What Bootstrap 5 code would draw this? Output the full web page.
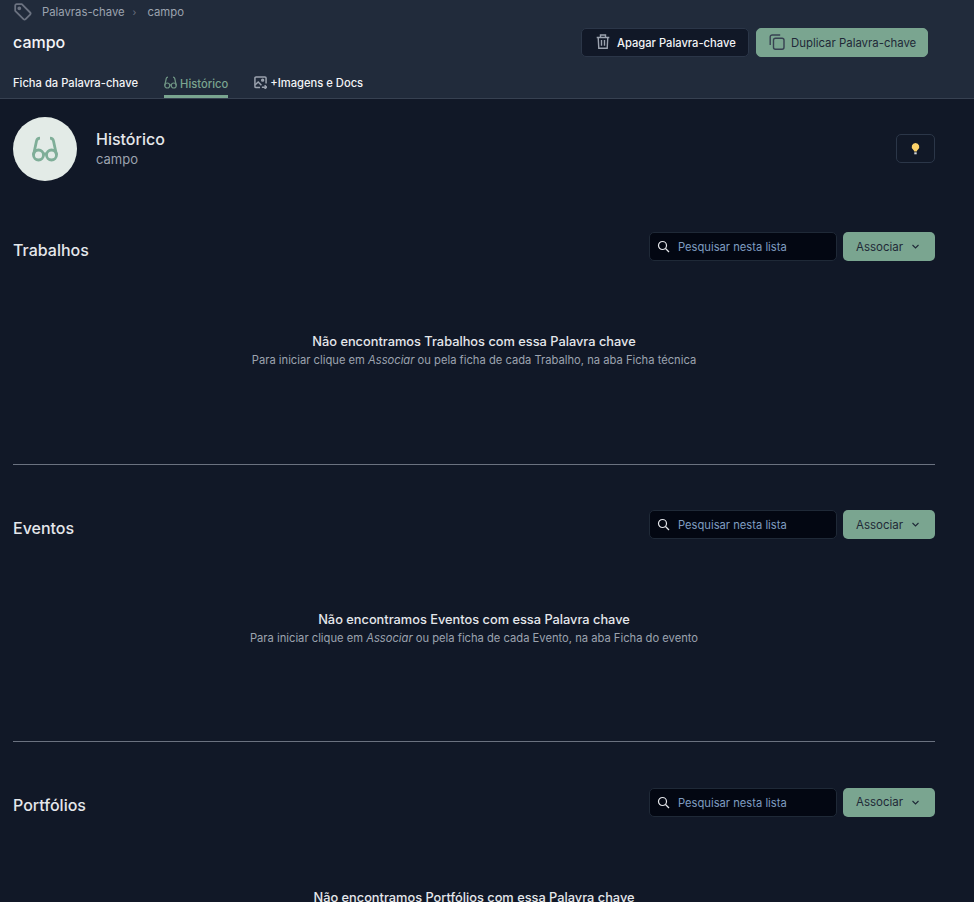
<!DOCTYPE html>
<html lang="pt">
<head>
<meta charset="utf-8">
<title>campo</title>
<link href="https://cdn.jsdelivr.net/npm/bootstrap@5.3.0/dist/css/bootstrap.min.css" rel="stylesheet">
<style>
html,body{height:902px;overflow:hidden}
body{background:#111827;font-family:Inter,"Liberation Sans",sans-serif;color:#e5e7eb;font-size:12px}
.topbar{height:99px;background:#212b3b;border-bottom:1px solid #374151;padding-left:13px;padding-right:46px;position:relative}
.crumbs{height:22px;color:#9ca3af;font-size:11.3px;padding-top:1px}
.crumbs svg.tag{margin-left:1px;margin-right:10px}
.crumbs span{padding-top:1px}
.crumb-sep{font-size:10px;color:#6b7280;margin:0 11px 0 8px}
.titlerow{height:32px;margin-top:5px}
.pagetitle{font-size:16px;font-weight:500;color:#f3f4f6;margin:0}
.actgroup{gap:7px;margin-bottom:2px}
.act{height:29px;border-radius:5px;font-size:11.2px;font-weight:500;display:inline-flex;align-items:center;white-space:nowrap;padding-top:4px}
.act svg{margin-top:-4px}
.act-dark{background:#111827;border:1px solid #2b3648;color:#f3f4f6;width:168px;padding-left:14px;padding-right:0;gap:7px}
.act-green{background:#7aa590;border:1px solid #7aa590;color:#1f2937;width:172px;font-weight:400;font-size:11.4px;padding-left:12px;padding-right:0;gap:6px}
.tabsrow{gap:26px;position:absolute;left:13px;top:71px;height:27px}
.tabitem{font-size:11.2px;font-weight:500;color:#f3f4f6;display:flex;align-items:flex-start;gap:3px;padding-top:4px;text-decoration:none;height:27px}
.tabitem svg{margin-top:1px}
.tabitem.on{color:#7aa590;border-bottom:3px solid #7aa590;padding-top:5px}
.tabitem.on svg{margin-top:0}
.pagewrap{padding:0 39px 0 13px}
.herorow{padding-top:18px;height:133.4px}
.heromain{height:64px}
.avatar{width:64px;height:64px;border-radius:50%;background:#e3ebe7}
.herotext{margin-left:19px;padding-bottom:2px}
.herotitle{font-size:16px;font-weight:500;color:#e5e7eb;line-height:20px;margin:0 0 1px}
.herosub{font-size:13px;color:#9ca3af;line-height:18px}
.tipbtn{width:39px;height:29px;border:1px solid #2b3648;border-radius:5px;background:#111827;margin-top:17px;padding:0}
.listhead{height:29px}
.listtitle{font-size:16px;font-weight:500;color:#e5e7eb;margin:8px 0 0}
.searchbox{width:188px;height:29px;background:#030712;border:1px solid #1f2937;border-radius:5px;padding-left:7px;gap:8px;color:#7f9cc0;font-size:11.2px}
.searchbox span{padding-top:2px}
.assoc{width:92px;height:29px;background:#7aa590;border:0;border-radius:5px;color:#1f2937;font-size:11.5px;padding:2px 0 0 13px;margin-left:6px;justify-content:flex-start}
.assoc svg{margin-left:8px;margin-top:-2px}
.emptyblock{text-align:center;height:202.4px;padding-top:72px}
.emptytitle{font-size:12.8px;font-weight:500;color:#e5e7eb;line-height:18px;margin:0}
.emptysub{font-size:11.2px;color:#9ca3af;line-height:18px;margin:0}
.rule{height:1px;background:#6b7280;margin:0 0 45.2px}
</style>
</head>
<body>
<header class="topbar">
  <div class="crumbs d-flex align-items-center">
    <svg class="tag" width="18" height="18" viewBox="0 0 18 18" fill="none" stroke="#6b7280" stroke-width="1.800" stroke-linejoin="round"><path d="M1.200 2.700A1.500 1.500 0 0 1 2.700 1.200h5.100l8.300 8.300a1.500 1.500 0 0 1 0 2.100l-4.500 4.500a1.500 1.500 0 0 1-2.100 0L1.200 7.800z"/><circle cx="5.300" cy="5.300" r="1" fill="#6b7280"/></svg>
    <span>Palavras-chave</span><span class="crumb-sep">›</span><span>campo</span>
  </div>
  <div class="titlerow d-flex align-items-center justify-content-between">
    <h1 class="pagetitle">campo</h1>
    <div class="actgroup d-flex">
      <button class="act act-dark"><svg width="14" height="15" viewBox="0 0 14 15" fill="none" stroke="#9ca3af" stroke-width="1.400"><path d="M.7 3.500h12.600M4.500 3.300V1h5v2.300M2.200 3.500l.6 10.800h8.400l.6-10.800M5.500 6v5.800M8.500 6v5.800"/></svg>Apagar Palavra-chave</button>
      <button class="act act-green"><svg width="16" height="16" viewBox="0 0 16 16" fill="none" stroke="#374151" stroke-width="1.400"><rect x="4.500" y="4.200" width="10.500" height="11" rx="2"/><path d="M1.200 11V3A2 2 0 0 1 3.200 1h8"/></svg>Duplicar Palavra-chave</button>
    </div>
  </div>
  <nav class="tabsrow d-flex">
    <a class="tabitem" href="#">Ficha da Palavra-chave</a>
    <a class="tabitem on" href="#"><svg width="13" height="13" viewBox="0 0 26 26" fill="none" stroke="#6f9584" stroke-width="2.400"><circle cx="6.500" cy="19" r="5"/><circle cx="19.500" cy="19" r="5"/><path d="M11.500 18.500c1-.8 2-.8 3 0M1.500 19 4.500 5c.3-1.500 1.500-2.800 3.500-2.800M24.500 19 21.500 5c-.3-1.500-1.500-2.800-3.500-2.800"/></svg>Histórico</a>
    <a class="tabitem" href="#"><svg width="13" height="13" viewBox="0 0 14 14" fill="none" stroke="#9ca3af" stroke-width="1.600"><path d="M6.500 12.500H2.200A1.200 1.200 0 0 1 1 11.300V2.200A1.200 1.200 0 0 1 2.200 1h9.600A1.200 1.200 0 0 1 13 2.200V8"/><circle cx="9.300" cy="4.500" r="1"/><path d="m1.300 9.500 3.200-3 3.500 3.500M8.500 12h5M11.500 10l2 2-2 2"/></svg>+Imagens e Docs</a>
  </nav>
</header>
<main class="pagewrap">
  <section class="herorow d-flex justify-content-between align-items-start">
    <div class="heromain d-flex">
      <div class="avatar d-flex align-items-center justify-content-center">
        <svg width="26" height="26" viewBox="0 0 26 26" fill="none" stroke="#7fae98" stroke-width="2.800"><circle cx="6.500" cy="19" r="5"/><circle cx="19.500" cy="19" r="5"/><path d="M11.500 18.500c1-.8 2-.8 3 0M1.500 19 4.500 5c.3-1.500 1.500-2.800 3.500-2.800M24.500 19 21.500 5c-.3-1.500-1.500-2.800-3.500-2.800"/></svg>
      </div>
      <div class="herotext d-flex flex-column justify-content-center">
        <h2 class="herotitle">Histórico</h2>
        <div class="herosub">campo</div>
      </div>
    </div>
    <button class="tipbtn d-flex align-items-center justify-content-center"><svg width="9" height="12" viewBox="0 0 9 12"><path d="M4.500 0a3.800 3.800 0 0 1 2.300 6.800c-.6.500-.9 1-1 1.700H3.200c-.1-.7-.4-1.200-1-1.700A3.800 3.800 0 0 1 4.500 0z" fill="#fcd26a"/><rect x="3.300" y="9.300" width="2.400" height="2" fill="#d1d5db"/></svg></button>
  </section>

  <section>
    <div class="listhead d-flex align-items-center justify-content-between">
      <h3 class="listtitle">Trabalhos</h3>
      <div class="d-flex">
        <div class="searchbox d-flex align-items-center"><svg width="13" height="13" viewBox="0 0 13 13" fill="none" stroke="#e5e7eb" stroke-width="1.200"><circle cx="5.500" cy="5.500" r="4"/><path d="m8.500 8.500 3.500 3.500"/></svg><span>Pesquisar nesta lista</span></div>
        <button class="assoc d-flex align-items-center">Associar<svg width="9" height="9" viewBox="0 0 9 9" fill="none" stroke="#1f2937" stroke-width="1.100"><path d="m1.500 3 3 3 3-3"/></svg></button>
      </div>
    </div>
    <div class="emptyblock">
      <p class="emptytitle">Não encontramos Trabalhos com essa Palavra chave</p>
      <p class="emptysub">Para iniciar clique em <em>Associar</em> ou pela ficha de cada Trabalho, na aba Ficha técnica</p>
    </div>
    <div class="rule"></div>
  </section>

  <section>
    <div class="listhead d-flex align-items-center justify-content-between">
      <h3 class="listtitle">Eventos</h3>
      <div class="d-flex">
        <div class="searchbox d-flex align-items-center"><svg width="13" height="13" viewBox="0 0 13 13" fill="none" stroke="#e5e7eb" stroke-width="1.200"><circle cx="5.500" cy="5.500" r="4"/><path d="m8.500 8.500 3.500 3.500"/></svg><span>Pesquisar nesta lista</span></div>
        <button class="assoc d-flex align-items-center">Associar<svg width="9" height="9" viewBox="0 0 9 9" fill="none" stroke="#1f2937" stroke-width="1.100"><path d="m1.500 3 3 3 3-3"/></svg></button>
      </div>
    </div>
    <div class="emptyblock">
      <p class="emptytitle">Não encontramos Eventos com essa Palavra chave</p>
      <p class="emptysub">Para iniciar clique em <em>Associar</em> ou pela ficha de cada Evento, na aba Ficha do evento</p>
    </div>
    <div class="rule"></div>
  </section>

  <section>
    <div class="listhead d-flex align-items-center justify-content-between">
      <h3 class="listtitle">Portfólios</h3>
      <div class="d-flex">
        <div class="searchbox d-flex align-items-center"><svg width="13" height="13" viewBox="0 0 13 13" fill="none" stroke="#e5e7eb" stroke-width="1.200"><circle cx="5.500" cy="5.500" r="4"/><path d="m8.500 8.500 3.500 3.500"/></svg><span>Pesquisar nesta lista</span></div>
        <button class="assoc d-flex align-items-center">Associar<svg width="9" height="9" viewBox="0 0 9 9" fill="none" stroke="#1f2937" stroke-width="1.100"><path d="m1.500 3 3 3 3-3"/></svg></button>
      </div>
    </div>
    <div class="emptyblock">
      <p class="emptytitle">Não encontramos Portfólios com essa Palavra chave</p>
    </div>
  </section>
</main>
<script src="https://cdn.jsdelivr.net/npm/bootstrap@5.3.0/dist/js/bootstrap.bundle.min.js"></script>
</body>
</html>
